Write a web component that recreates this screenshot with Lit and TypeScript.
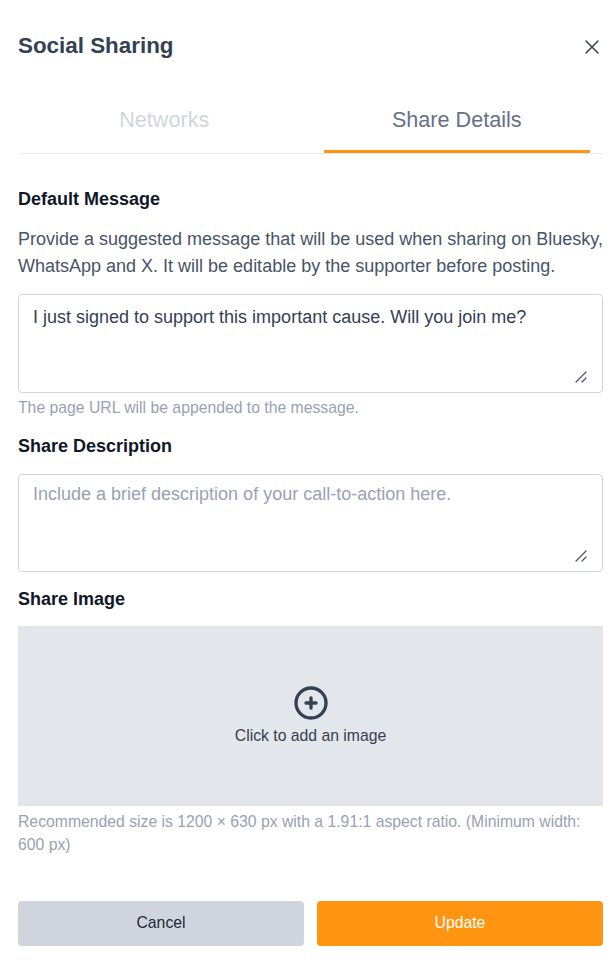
import { LitElement, html, css } from "lit";
import { customElement } from "lit/decorators.js";

@customElement("app-root")
export class AppRoot extends LitElement {
  static styles = css`
    :host {
      display: block;
      box-sizing: border-box;
      width: 616px;
      height: 970px;
      padding: 0 13px 0 18px;
      background: #fff;
      font-family: "Liberation Sans", Arial, sans-serif;
      overflow: hidden;
    }
    * { box-sizing: border-box; }
    .header {
      display: flex;
      justify-content: space-between;
      align-items: center;
      height: 32px;
      margin-top: 30px;
    }
    h1 {
      margin: 0;
      font-size: 22.4px;
      line-height: 32px;
      font-weight: 700;
      color: #344054;
    }
    .close { display: block; width: 24px; height: 24px; margin-right: -1px; margin-top: 2px; color: #344054; }
    .tabs {
      display: flex;
      height: 62px;
      margin-top: 30px;
      border-bottom: 1px solid #eaecf0;
    }
    .tab {
      flex: 1;
      display: flex;
      margin: 0 13px;
      align-items: center;
      justify-content: center;
      font-size: 21.6px;
      color: #d0d5dd;
      padding-bottom: 5px;
    }
    .tab.active {
      color: #667085;
      border-bottom: 3px solid #ff9410;
      padding-bottom: 2px;
    }
    .field-label {
      font-size: 18px;
      line-height: 24px;
      font-weight: 700;
      color: #101828;
    }
    .first { margin-top: 33px; }
    .desc {
      margin: 15px 0 0;
      font-size: 18px;
      line-height: 27px;
      color: #475467;
      white-space: nowrap;
    }
    .area { position: relative; }
    textarea {
      display: block;
      width: 100%;
      height: 99px;
      margin: 0;
      padding: 8px 14px;
      border: 1px solid #d0d5dd;
      border-radius: 4px;
      font: 18px/28px "Liberation Sans", Arial, sans-serif;
      color: #344054;
      background: #fff;
      outline: none;
      resize: none;
    }
    textarea::placeholder { color: #98a2b3; opacity: 1; }
    .desc-area textarea { height: 98px; padding-top: 5px; }
    .handle {
      position: absolute;
      right: 16px;
      bottom: 10px;
      width: 12px;
      height: 12px;
      color: #475467;
    }
    .msg { margin-top: 14px; }
    .hint {
      margin: 3px 0 0;
      font-size: 15.75px;
      line-height: 23.6px;
      color: #98a2b3;
    }
    .second { margin-top: 14px; }
    .desc-area { margin-top: 16px; }
    .third { margin-top: 15px; }
    .dropzone {
      display: flex;
      flex-direction: column;
      align-items: center;
      justify-content: center;
      width: 100%;
      height: 180px;
      margin-top: 15px;
      background: #e3e6eb;
      color: #344054;
      font-size: 15.75px;
      line-height: 24px;
    }
    .dropzone svg { display: block; width: 40px; height: 40px; margin-bottom: 1px; }
    .hint.rec { margin-top: 4px; }
    .actions {
      display: grid;
      grid-template-columns: 1fr 1fr;
      gap: 13px;
      margin-top: 44px;
    }
    button {
      height: 45px;
      border: 0;
      border-radius: 4px;
      font: 15.75px "Liberation Sans", Arial, sans-serif;
      padding: 0;
    }
    .cancel { background: #d0d5dd; color: #1d2939; }
    .update { background: #ff9410; color: #fff; }
  `;

  private handle() {
    return html`<svg class="handle" viewBox="0 0 12 12" fill="none" stroke="currentColor" stroke-width="1.2" stroke-linecap="round">
      <path d="M1 11L11 1M7 11l4-4"></path>
    </svg>`;
  }

  render() {
    return html`
      <div class="header">
        <h1>Social Sharing</h1>
        <svg class="close" viewBox="0 0 24 24" fill="none" stroke="currentColor" stroke-width="1.5" stroke-linecap="round" stroke-linejoin="round">
          <path d="M6 18L18 6M6 6l12 12"></path>
        </svg>
      </div>
      <div class="tabs">
        <div class="tab">Networks</div>
        <div class="tab active">Share Details</div>
      </div>
      <div class="field-label first">Default Message</div>
      <p class="desc">Provide a suggested message that will be used when sharing on Bluesky,<br />WhatsApp and X. It will be editable by the supporter before posting.</p>
      <div class="area msg">
        <textarea .value=${"I just signed to support this important cause. Will you join me?"}></textarea>
        ${this.handle()}
      </div>
      <p class="hint">The page URL will be appended to the message.</p>
      <div class="field-label second">Share Description</div>
      <div class="area desc-area">
        <textarea placeholder="Include a brief description of your call-to-action here."></textarea>
        ${this.handle()}
      </div>
      <div class="field-label third">Share Image</div>
      <div class="dropzone">
        <svg viewBox="0 0 24 24" fill="none" stroke="currentColor" stroke-width="2" stroke-linecap="round" stroke-linejoin="round">
          <path d="M12 9v3m0 0v3m0-3h3m-3 0H9m12 0a9 9 0 11-18 0 9 9 0 0118 0z"></path>
        </svg>
        <span>Click to add an image</span>
      </div>
      <p class="hint rec">Recommended size is 1200 × 630 px with a 1.91:1 aspect ratio. (Minimum width: 600 px)</p>
      <div class="actions">
        <button class="cancel">Cancel</button>
        <button class="update">Update</button>
      </div>
    `;
  }
}
